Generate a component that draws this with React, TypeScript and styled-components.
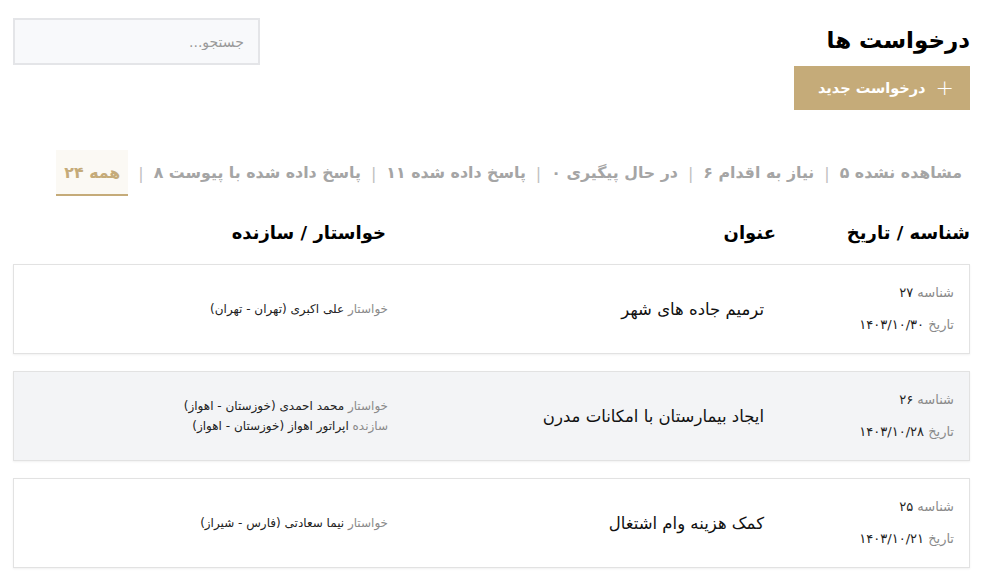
import React from 'react';
import styled, { createGlobalStyle } from 'styled-components';

const GlobalStyle = createGlobalStyle`
  html, body {
    margin: 0;
    padding: 0;
    background: #fff;
  }
  body {
    font-family: "DejaVu Sans", sans-serif;
    color: #111;
  }
  * { box-sizing: border-box; }
`;

const tabs = [
  { label: 'مشاهده نشده', count: '۵' },
  { label: 'نیاز به اقدام', count: '۶' },
  { label: 'در حال پیگیری', count: '۰' },
  { label: 'پاسخ داده شده', count: '۱۱' },
  { label: 'پاسخ داده شده با پیوست', count: '۸' },
  { label: 'همه', count: '۲۴', active: true },
];

type Person = { role: string; name: string };

const requests: { id: string; date: string; title: string; people: Person[]; shaded?: boolean }[] = [
  {
    id: '۲۷',
    date: '۱۴۰۳/۱۰/۳۰',
    title: 'ترمیم جاده های شهر',
    people: [{ role: 'خواستار', name: 'علی اکبری (تهران - تهران)' }],
  },
  {
    id: '۲۶',
    date: '۱۴۰۳/۱۰/۲۸',
    title: 'ایجاد بیمارستان با امکانات مدرن',
    people: [
      { role: 'خواستار', name: 'محمد احمدی (خوزستان - اهواز)' },
      { role: 'سازنده', name: 'اپراتور اهواز (خوزستان - اهواز)' },
    ],
    shaded: true,
  },
  {
    id: '۲۵',
    date: '۱۴۰۳/۱۰/۲۱',
    title: 'کمک هزینه وام اشتغال',
    people: [{ role: 'خواستار', name: 'نیما سعادتی (فارس - شیراز)' }],
  },
];

const App = () => {
  return (
    <Page dir="rtl">
      <GlobalStyle />
      <Header>
        <TitleBlock>
          <Title>درخواست ها</Title>
          <NewButton>
            <Plus>+</Plus>
            درخواست جدید
          </NewButton>
        </TitleBlock>
        <SearchInput type="text" placeholder="جستجو..." />
      </Header>

      <Tabs>
        {tabs.map((t, i) => (
          <React.Fragment key={t.label}>
            {i > 0 && <Sep>|</Sep>}
            <Tab $active={t.active}>
              {t.label} {t.count}
            </Tab>
          </React.Fragment>
        ))}
      </Tabs>

      <HeadRow>
        <HeadCell>شناسه / تاریخ</HeadCell>
        <HeadCell>عنوان</HeadCell>
        <HeadCell>خواستار / سازنده</HeadCell>
      </HeadRow>

      <List>
        {requests.map((r) => (
          <Row key={r.id} $shaded={r.shaded}>
            <Meta>
              <MetaLine>
                <Label>شناسه</Label> <Value>{r.id}</Value>
              </MetaLine>
              <MetaLine>
                <Label>تاریخ</Label> <Value>{r.date}</Value>
              </MetaLine>
            </Meta>
            <RowTitle>{r.title}</RowTitle>
            <People>
              {r.people.map((p) => (
                <PersonLine key={p.role}>
                  <Label>{p.role}</Label> {p.name}
                </PersonLine>
              ))}
            </People>
          </Row>
        ))}
      </List>
    </Page>
  );
};

const Page = styled.div`
  padding: 18px 12px 0 13px;
  min-height: 100vh;
`;

const Header = styled.div`
  display: flex;
  justify-content: space-between;
  align-items: flex-start;
`;

const TitleBlock = styled.div`
  display: flex;
  flex-direction: column;
  align-items: flex-start;
  gap: 8px;
`;

const Title = styled.h1`
  margin: 4px 0 0;
  font-size: 23px;
  font-weight: 700;
  line-height: 36px;
  color: #000;
`;

const NewButton = styled.button`
  display: flex;
  align-items: center;
  gap: 10px;
  height: 44px;
  width: 176px;
  padding: 0 16px;
  border: none;
  background: #c5ab79;
  color: #fff;
  font-family: inherit;
  font-size: 14.5px;
  font-weight: 700;
  white-space: nowrap;
  cursor: pointer;
`;

const Plus = styled.span`
  font-size: 22px;
  font-weight: 300;
  line-height: 1;
`;

const SearchInput = styled.input`
  width: 247px;
  height: 47px;
  background: #f8f9fb;
  border: 2px solid #e4e5e8;
  font-family: inherit;
  font-size: 14px;
  padding: 0 14px;
  color: #333;
  &::placeholder {
    color: #9a9a9a;
  }
`;

const Tabs = styled.div`
  display: flex;
  align-items: stretch;
  gap: 10px;
  margin-top: 40px;
  padding-right: 8px;
  height: 46px;
`;

const Tab = styled.div<{ $active?: boolean }>`
  display: flex;
  align-items: center;
  padding: 0 ${(p) => (p.$active ? '8px' : '0')};
  font-size: 15.8px;
  font-weight: 700;
  color: ${(p) => (p.$active ? '#c5ab79' : '#a5a5a5')};
  background: ${(p) => (p.$active ? '#fbf9f4' : 'transparent')};
  border-bottom: 2px solid ${(p) => (p.$active ? '#c5ab79' : 'transparent')};
  white-space: nowrap;
`;

const Sep = styled.span`
  display: flex;
  align-items: center;
  color: #c0c0c0;
  font-size: 16px;
`;

const HeadRow = styled.div`
  display: grid;
  grid-template-columns: 194px 390px 1fr;
  margin-top: 14px;
  height: 44px;
  align-items: center;
`;

const HeadCell = styled.div`
  font-size: 18px;
  font-weight: 700;
  color: #000;
`;

const List = styled.div`
  display: flex;
  flex-direction: column;
  gap: 17px;
  margin-top: 10px;
`;

const Row = styled.div<{ $shaded?: boolean }>`
  display: grid;
  grid-template-columns: 190px 376px 1fr;
  align-items: center;
  height: 90px;
  padding: 0 15px;
  background: ${(p) => (p.$shaded ? '#f3f4f6' : '#fff')};
  border: 1px solid #e2e2e2;
  box-shadow: 0 1px 2px rgba(0, 0, 0, 0.06);
`;

const Meta = styled.div`
  display: flex;
  flex-direction: column;
  gap: 12px;
  font-size: 13px;
`;

const MetaLine = styled.div`
  line-height: 20px;
`;

const Label = styled.span`
  color: #8a8a8a;
  font-weight: 400;
`;

const Value = styled.span`
  color: #222;
  font-weight: 400;
`;

const RowTitle = styled.div`
  font-size: 16.5px;
  color: #111;
`;

const People = styled.div`
  display: flex;
  flex-direction: column;
  gap: 4px;
  font-size: 12px;
`;

const PersonLine = styled.div`
  color: #222;
  line-height: 16px;
`;

export default App;
